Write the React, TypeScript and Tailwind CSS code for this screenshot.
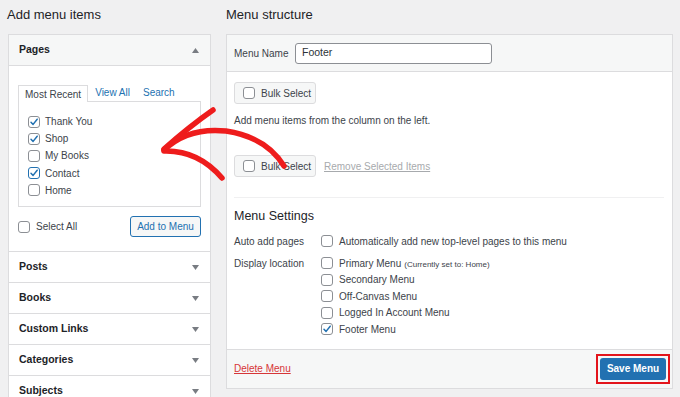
import React from "react";

const Check = ({ checked = false, focus = false }: { checked?: boolean; focus?: boolean }) => (
  <span
    className={
      "relative inline-flex w-[12px] h-[12px] shrink-0 rounded-[3px] bg-white items-center justify-center " +
      (focus ? "border-[1.5px] border-[#2271b1]" : "border border-[#8c8f94]")
    }
  >
    {checked && (
      <svg width="10" height="10" viewBox="0 0 10 10" className="absolute">
        <path d="M2 5.2 L4.1 7.4 L8.2 2.2" fill="none" stroke="#2271b1" strokeWidth="1.5" strokeLinecap="round" strokeLinejoin="round" />
      </svg>
    )}
  </span>
);

const Tri = ({ up = false }: { up?: boolean }) => (
  <svg width="7" height="5" viewBox="0 0 7 5">
    {up ? <path d="M0 5 L3.5 0 L7 5 Z" fill="#787c82" /> : <path d="M0 0 L7 0 L3.5 5 Z" fill="#787c82" />}
  </svg>
);

const Accordion = ({ title }: { title: string }) => (
  <div className="h-[31px] border-t border-[#dcdcde] flex items-center justify-between pl-[10px] pr-[11px]">
    <span className="text-[10.5px] font-bold text-[#1d2327]">{title}</span>
    <Tri />
  </div>
);

export default function App() {
  const pages = [
    { t: "Thank You", c: true },
    { t: "Shop", c: true },
    { t: "My Books", c: false },
    { t: "Contact", c: true, f: true },
    { t: "Home", c: false },
  ];
  const locs = [
    { t: "Primary Menu", c: false, note: "(Currently set to: Home)" },
    { t: "Secondary Menu", c: false },
    { t: "Off-Canvas Menu", c: false },
    { t: "Logged In Account Menu", c: false },
    { t: "Footer Menu", c: true },
  ];
  return (
    <div
      className="relative w-[680px] h-[397px] overflow-hidden bg-[#f0f0f1] text-[10px] text-[#3c434a]"
      style={{ fontFamily: '"Liberation Sans", Arial, sans-serif' }}
    >
      <div className="flex pl-[8px] pr-[7px] gap-[15px]">
        {/* Left column */}
        <div className="w-[203px] shrink-0">
          <h2 className="h-[34px] leading-[30px] text-[13px] text-[#1d2327] -ml-[1px]">Add menu items</h2>
          <div className="bg-white border border-[#dcdcde]">
            <div className="h-[31px] bg-[#f6f7f7] border-b border-[#dcdcde] flex items-center justify-between pl-[10px] pr-[11px]">
              <span className="text-[10.5px] font-bold text-[#1d2327]">Pages</span>
              <Tri up />
            </div>
            <div className="px-[9px] pt-[18px] pb-[14px]">
              <div className="flex items-end h-[17px]">
                <div className="h-[17px] px-[6px] border border-b-0 border-[#dcdcde] bg-white flex items-center text-[#3c434a] relative top-[1px]">
                  Most Recent
                </div>
                <span className="ml-[7px] h-[17px] flex items-center text-[#2271b1]">View All</span>
                <span className="ml-[13px] h-[17px] flex items-center text-[#2271b1]">Search</span>
              </div>
              <div className="border border-[#dcdcde] h-[106px] pl-[9px] pt-[11px]">
                {pages.map((p) => (
                  <div key={p.t} className="h-[17.2px] flex items-center gap-[5px]">
                    <Check checked={p.c} focus={p.f} />
                    <span>{p.t}</span>
                  </div>
                ))}
              </div>
              <div className="flex items-center justify-between mt-[9px] h-[21px]">
                <div className="flex items-center gap-[6px]">
                  <Check />
                  <span>Select All</span>
                </div>
                <button className="h-[21px] w-[71px] rounded-[3px] border border-[#2271b1] bg-[#f6f7f7] text-[#2271b1] text-[10px]">
                  Add to Menu
                </button>
              </div>
            </div>
            <Accordion title="Posts" />
            <Accordion title="Books" />
            <Accordion title="Custom Links" />
            <Accordion title="Categories" />
            <Accordion title="Subjects" />
          </div>
        </div>

        {/* Right column */}
        <div className="flex-1">
          <h2 className="h-[34px] leading-[30px] text-[13px] text-[#1d2327]">Menu structure</h2>
          <div className="bg-white border border-[#dcdcde]">
            <div className="h-[37px] bg-[#f6f7f7] border-b border-[#dcdcde] flex items-center pl-[7px]">
              <span className="w-[61px]">Menu Name</span>
              <div className="w-[197px] h-[21px] border border-[#8c8f94] rounded-[3px] bg-white flex items-center pl-[6px] text-[10.5px] text-[#2c3338]">
                Footer
              </div>
            </div>
            <div className="px-[7px] pt-[10px]">
              <button className="h-[22px] w-[82px] rounded-[3px] border border-[#dcdcde] bg-[#f6f7f7] flex items-center gap-[6px] pl-[8px] text-[10px] text-[#3c434a]">
                <Check />
                <span>Bulk Select</span>
              </button>
              <div className="h-[32px] flex items-center">Add menu items from the column on the left.</div>
              <div className="flex items-center gap-[8px] mt-[19px]">
                <button className="h-[22px] w-[82px] rounded-[3px] border border-[#dcdcde] bg-[#f6f7f7] flex items-center gap-[6px] pl-[8px] text-[10px] text-[#3c434a]">
                  <Check />
                  <span>Bulk Select</span>
                </button>
                <span className="text-[#a7aaad] underline">Remove Selected Items</span>
              </div>
              <div className="mt-[20px] border-t border-[#f0f0f1] mr-[1px]" />
              <h3 className="h-[36px] flex items-center text-[12.5px] font-medium text-[#1d2327] pt-[1px]">Menu Settings</h3>
              <div className="flex items-start">
                <div className="w-[87px] h-[14px] flex items-center">Auto add pages</div>
                <div className="flex items-center gap-[6px] h-[14px]">
                  <Check />
                  <span>Automatically add new top-level pages to this menu</span>
                </div>
              </div>
              <div className="flex items-start mt-[7px] pb-[11px]">
                <div className="w-[87px] h-[16.5px] flex items-center">Display location</div>
                <div>
                  {locs.map((l) => (
                    <div key={l.t} className="h-[16.5px] flex items-center gap-[6px]">
                      <Check checked={l.c} />
                      <span>
                        {l.t}
                        {l.note && <span className="text-[8px] ml-[3px]">{l.note}</span>}
                      </span>
                    </div>
                  ))}
                </div>
              </div>
            </div>
            <div className="h-[39px] bg-[#f6f7f7] border-t border-[#dcdcde] flex items-center justify-between pl-[7px] pr-[2px]">
              <span className="text-[#d63638] underline">Delete Menu</span>
              <div className="border-2 border-[#e3141b] px-[2px] py-[2px]">
                <button className="h-[22px] w-[66px] rounded-[3px] bg-[#2271b1] text-white text-[10px] font-bold">
                  Save Menu
                </button>
              </div>
            </div>
          </div>
        </div>
      </div>

      {/* Red annotation arrow */}
      <svg className="absolute left-0 top-0 pointer-events-none" width="680" height="397" viewBox="0 0 680 397">
        <g fill="none" stroke="#ee1c1c" strokeLinecap="round" strokeLinejoin="round">
          <path d="M164 150 Q 188 127 226 131 Q 266 137 284 166" strokeWidth="5.5" />
          <path d="M164 149 Q 190 126 213 110" strokeWidth="5.5" />
          <path d="M164 151 Q 198 150 222 178" strokeWidth="5.5" />
        </g>
      </svg>
    </div>
  );
}
